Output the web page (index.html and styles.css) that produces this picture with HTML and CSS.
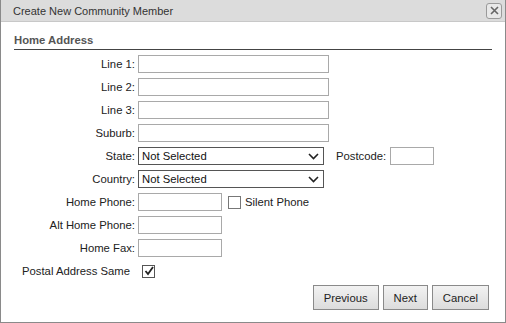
FILE: index.html
```html
<!DOCTYPE html>
<html>
<head>
<meta charset="utf-8">
<link rel="stylesheet" href="styles.css">
</head>
<body>
<div class="dialog">
  <div class="titlebar">
    <span class="title">Create New Community Member</span>
    <span class="close"><svg width="9" height="9" viewBox="0 0 9 9"><path d="M1 1L8 8M8 1L1 8" stroke="#666" stroke-width="1.6"/></svg></span>
  </div>
  <div class="content">
    <div class="section">Home Address</div>
    <div class="form">
      <label class="lbl">Line 1:</label><div class="field"><input class="txt wide" type="text"></div>
      <label class="lbl">Line 2:</label><div class="field"><input class="txt wide" type="text"></div>
      <label class="lbl">Line 3:</label><div class="field"><input class="txt wide" type="text"></div>
      <label class="lbl">Suburb:</label><div class="field"><input class="txt wide" type="text"></div>
      <label class="lbl">State:</label>
      <div class="field">
        <div class="select"><span>Not Selected</span><svg width="11" height="7" viewBox="0 0 11 7"><path d="M1 1L5.5 5.5L10 1" fill="none" stroke="#222" stroke-width="1.6"/></svg></div>
        <label class="lbl2">Postcode:</label><input class="txt post" type="text">
      </div>
      <label class="lbl">Country:</label>
      <div class="field">
        <div class="select"><span>Not Selected</span><svg width="11" height="7" viewBox="0 0 11 7"><path d="M1 1L5.5 5.5L10 1" fill="none" stroke="#222" stroke-width="1.6"/></svg></div>
      </div>
      <label class="lbl">Home Phone:</label>
      <div class="field"><input class="txt short" type="text"><span class="cb"></span><span class="cbtext">Silent Phone</span></div>
      <label class="lbl">Alt Home Phone:</label><div class="field"><input class="txt short" type="text"></div>
      <label class="lbl">Home Fax:</label><div class="field"><input class="txt short" type="text"></div>
    </div>
    <div class="postal">
      <span class="plabel">Postal Address Same</span>
      <span class="cb checked"><svg width="10" height="10" viewBox="0 0 10 10"><path d="M1.5 5L4 8L9 1" fill="none" stroke="#222" stroke-width="1.8"/></svg></span>
    </div>
    <div class="buttons">
      <button class="btn">Previous</button>
      <button class="btn">Next</button>
      <button class="btn">Cancel</button>
    </div>
  </div>
</div>
</body>
</html>
```
FILE: styles.css
```css
html, body { margin: 0; padding: 0; background: #fff; }
body { font-family: "Liberation Sans", Arial, sans-serif; font-size: 11.3px; color: #222; }
.dialog {
  width: 506px; height: 323px; box-sizing: border-box;
  border: 1px solid #8a8a8a; border-top: none;
  background: #fff;
}
.titlebar {
  height: 22px; background: #dcdcdc; border-bottom: 1px solid #c8c8c8;
  display: flex; align-items: center; justify-content: space-between;
  padding: 0 3px 0 12px; box-sizing: border-box;
}
.title { color: #333; font-size: 11px; }
.close {
  width: 14px; height: 14px; border: 1px solid #9a9a9a; border-radius: 3px;
  background: #e8e8e8; display: flex; align-items: center; justify-content: center;
}
.content { padding: 0 13px 0 13px; }
.section {
  margin-top: 11px; font-weight: bold; color: #555;
  padding-bottom: 2px; border-bottom: 1px solid #444;
  line-height: 14px;
}
.form {
  margin-top: 5px;
  display: grid; grid-template-columns: 121px 1fr;
  column-gap: 3px; row-gap: 5px;
}
.lbl { text-align: right; line-height: 18px; height: 18px; white-space: nowrap; color: #222; }
.field { display: flex; align-items: center; height: 18px; }
.txt {
  box-sizing: border-box; height: 18px; border: 1px solid #a9a9a9; margin: 0; padding: 0 2px;
  font: inherit; background: #fff;
}
.wide { width: 191px; }
.short { width: 84px; }
.post { width: 44px; }
.select {
  box-sizing: border-box; width: 186px; height: 18px; border: 1px solid #555;
  display: flex; align-items: center; justify-content: space-between; padding: 0 4px 0 3px;
  color: #111;
}
.lbl2 { margin-left: 12px; margin-right: 4px; }
.cb {
  box-sizing: border-box; width: 13px; height: 13px; border: 1px solid #777; background: #fff;
  display: inline-flex; align-items: center; justify-content: center; margin-left: 6px;
}
.cbtext { margin-left: 4px; }
.postal { display: flex; align-items: center; margin-top: 7px; height: 14px; }
.plabel { margin-left: 8px; width: 120px; white-space: nowrap; }
.postal .cb { border-color: #555; margin-left: 0; }
.buttons { display: flex; justify-content: flex-end; gap: 4px; margin-top: 7px; padding-right: 3px; }
.btn {
  font: inherit; color: #222; height: 25px; padding: 0 10px; margin: 0;
  border: 1px solid #8a8a8a; background: linear-gradient(#f2f2f2, #dcdcdc); border-radius: 0;
}
```
